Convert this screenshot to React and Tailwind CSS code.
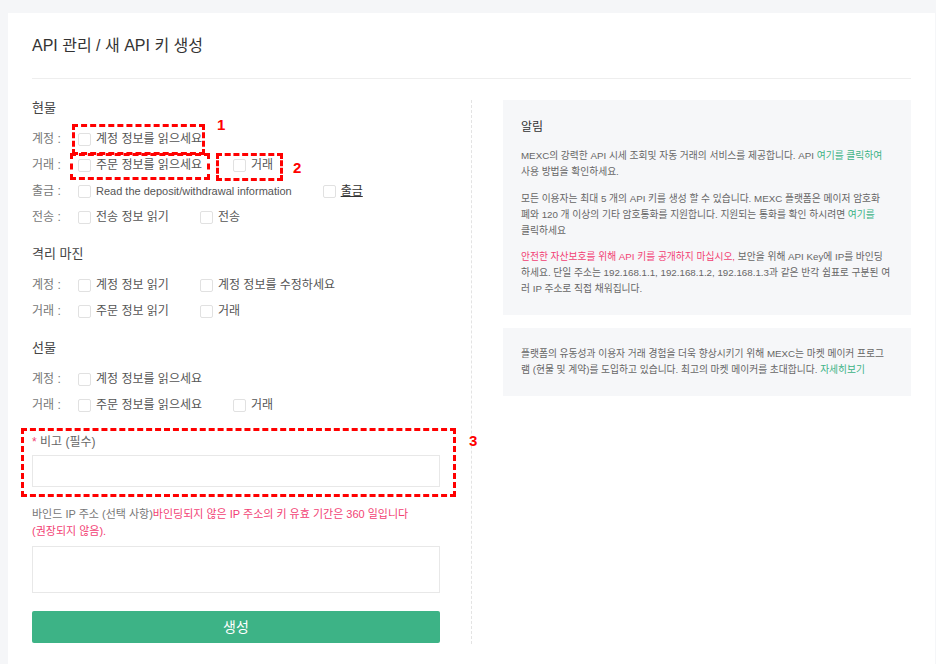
import { useState } from "react";

function Check({ checked, onChange, children, underline, small }) {
    return (
        <label className="mr-[31px] flex cursor-pointer items-center gap-[5px]">
            <span
                onClick={onChange}
                className={"h-[13px] w-[13px] rounded-[2px] border " + (checked ? "border-[#3db386] bg-[#3db386]" : "border-[#e1e1e1] bg-white")}
            />
            <span className={(underline ? "text-[#333] underline" : "") + (small ? " text-[11px]" : "")}>{children}</span>
        </label>
    );
}

function PermRow({ label, items, state, toggle }) {
    return (
        <div className="flex h-[26px] items-center text-xs text-[#555]">
            <span className="w-[46px] text-[#777]">{label} :</span>
            {items.map((it) => (
                <Check key={it.id} checked={!!state[it.id]} onChange={() => toggle(it.id)} underline={it.underline} small={it.small}>
                    {it.text}
                </Check>
            ))}
        </div>
    );
}

const sections = [
    {
        title: "현물",
        rows: [
            { label: "계정", items: [{ id: "s-acc-r", text: "계정 정보를 읽으세요" }] },
            { label: "거래", items: [{ id: "s-tr-r", text: "주문 정보를 읽으세요" }, { id: "s-tr-w", text: "거래" }] },
            { label: "출금", items: [{ id: "s-wd-r", text: "Read the deposit/withdrawal information", small: true }, { id: "s-wd-w", text: "출금", underline: true }] },
            { label: "전송", items: [{ id: "s-tf-r", text: "전송 정보 읽기" }, { id: "s-tf-w", text: "전송" }] },
        ],
    },
    {
        title: "격리 마진",
        rows: [
            { label: "계정", items: [{ id: "m-acc-r", text: "계정 정보 읽기" }, { id: "m-acc-w", text: "계정 정보를 수정하세요" }] },
            { label: "거래", items: [{ id: "m-tr-r", text: "주문 정보 읽기" }, { id: "m-tr-w", text: "거래" }] },
        ],
    },
    {
        title: "선물",
        rows: [
            { label: "계정", items: [{ id: "f-acc-r", text: "계정 정보를 읽으세요" }] },
            { label: "거래", items: [{ id: "f-tr-r", text: "주문 정보를 읽으세요" }, { id: "f-tr-w", text: "거래" }] },
        ],
    },
];

export default function App() {
    const [perms, setPerms] = useState({});
    const [memo, setMemo] = useState("");
    const [ips, setIps] = useState("");
    const toggle = (id) => setPerms((p) => ({ ...p, [id]: !p[id] }));

    return (
        <div className="min-h-screen bg-[#f5f6f8] pl-2 pr-px pt-[13px] font-['Liberation_Sans','Noto_Sans_CJK_KR',sans-serif]">
            <div className="relative min-h-[651px] bg-white px-6">
                {/* header */}
                <div className="flex h-[66px] items-center border-b border-[#eeeeee] text-base text-[#333]">
                    API 관리 / 새 API 키 생성
                </div>

                <div className="flex pt-[21px]">
                    {/* left: form */}
                    <div className="w-[408px] shrink-0">
                        {sections.map((sec, i) => (
                            <div key={sec.title} className={i === 0 ? "" : "mt-4"}>
                                <div className="text-[13px] leading-4 text-[#444]">{sec.title}</div>
                                <div className="mt-[10px]">
                                    {sec.rows.map((r) => (
                                        <PermRow key={r.label} label={r.label} items={r.items} state={perms} toggle={toggle} />
                                    ))}
                                </div>
                            </div>
                        ))}

                        <div className="mt-4 text-xs leading-4 text-[#666]">
                            <span className="text-[#f23f74]">*</span> 비고 (필수)
                        </div>
                        <input
                            value={memo}
                            onChange={(e) => setMemo(e.target.value)}
                            className="mt-[5px] block h-8 w-full border border-[#e8e8e8] px-2 text-xs outline-none"
                        />

                        <p className="mt-[19px] text-[11px] leading-[17px] text-[#777]">
                            바인드 IP 주소 (선택 사항)
                            <span className="text-[#f23f74]">
                                바인딩되지 않은 IP 주소의 키 유효 기간은 360 일입니다
                                <br />
                                (권장되지 않음).
                            </span>
                        </p>
                        <textarea
                            value={ips}
                            onChange={(e) => setIps(e.target.value)}
                            className="mt-[6px] block h-[47px] w-full resize-none border border-[#e8e8e8] px-2 py-1 text-xs outline-none"
                        />

                        <button className="mt-[18px] flex h-8 w-full items-center justify-center rounded-[2px] bg-[#3db386] text-sm text-white">
                            생성
                        </button>
                    </div>

                    {/* right: notices */}
                    <div className="ml-[31px] min-h-[544px] flex-1 border-l border-dashed border-[#e3e3e3] pl-[31px] text-[9.75px] leading-4 text-[#666]">
                        <div className="bg-[#f6f7f9] px-[18px] pb-[18px] pt-[19px]">
                            <div className="text-[12px] leading-4 text-[#333]">알림</div>
                            <p className="mt-[13px]">
                                MEXC의 강력한 API 시세 조회및 자동 거래의 서비스를 제공합니다. API <span className="text-[#3db386]">여기를 클릭하여</span>
                                <br />
                                사용 방법을 확인하세요.
                            </p>
                            <p className="mt-[11px]">
                                모든 이용자는 최대 5 개의 API 키를 생성 할 수 있습니다. MEXC 플랫폼은 메이저 암호화
                                <br />
                                폐와 120 개 이상의 기타 암호통화를 지원합니다. 지원되는 통화를 확인 하시려면 <span className="text-[#3db386]">여기를</span>
                                <br />
                                클릭하세요
                            </p>
                            <p className="mt-[10px]">
                                <span className="text-[#f23f74]">안전한 자산보호를 위해 API 키를 공개하지 마십시오,</span> 보안을 위해 API Key에 IP를 바인딩
                                <br />
                                하세요. 단일 주소는 192.168.1.1, 192.168.1.2, 192.168.1.3과 같은 반각 쉼표로 구분된 여
                                <br />
                                러 IP 주소로 직접 채워집니다.
                            </p>
                        </div>

                        <div className="mt-[13px] bg-[#f6f7f9] px-[18px] py-[18px]">
                            <p>
                                플랫폼의 유동성과 이용자 거래 경험을 더욱 향상시키기 위해 MEXC는 마켓 메이커 프로그
                                <br />
                                램 (현물 및 계약)를 도입하고 있습니다. 최고의 마켓 메이커를 초대합니다. <span className="text-[#3db386]">자세히보기</span>
                            </p>
                        </div>
                    </div>
                </div>

                {/* red annotation marks */}
                <div className="pointer-events-none absolute left-[64px] top-[111px] h-[31px] w-[133px] border-[3px] border-dashed border-[#ff0000]" />
                <span className="pointer-events-none absolute left-[209px] top-[102px] text-[15px] font-bold leading-5 text-[#ff0000]">1</span>
                <div className="pointer-events-none absolute left-[62px] top-[140px] h-[27px] w-[140px] border-[3px] border-dashed border-[#ff0000]" />
                <div className="pointer-events-none absolute left-[208px] top-[140px] h-[28px] w-[67px] border-[3px] border-dashed border-[#ff0000]" />
                <span className="pointer-events-none absolute left-[285px] top-[145px] text-[15px] font-bold leading-5 text-[#ff0000]">2</span>
                <div className="pointer-events-none absolute left-[13px] top-[415px] h-[69px] w-[435px] border-[3px] border-dashed border-[#ff0000]" />
                <span className="pointer-events-none absolute left-[461px] top-[418px] text-[15px] font-bold leading-5 text-[#ff0000]">3</span>
            </div>
        </div>
    );
}
